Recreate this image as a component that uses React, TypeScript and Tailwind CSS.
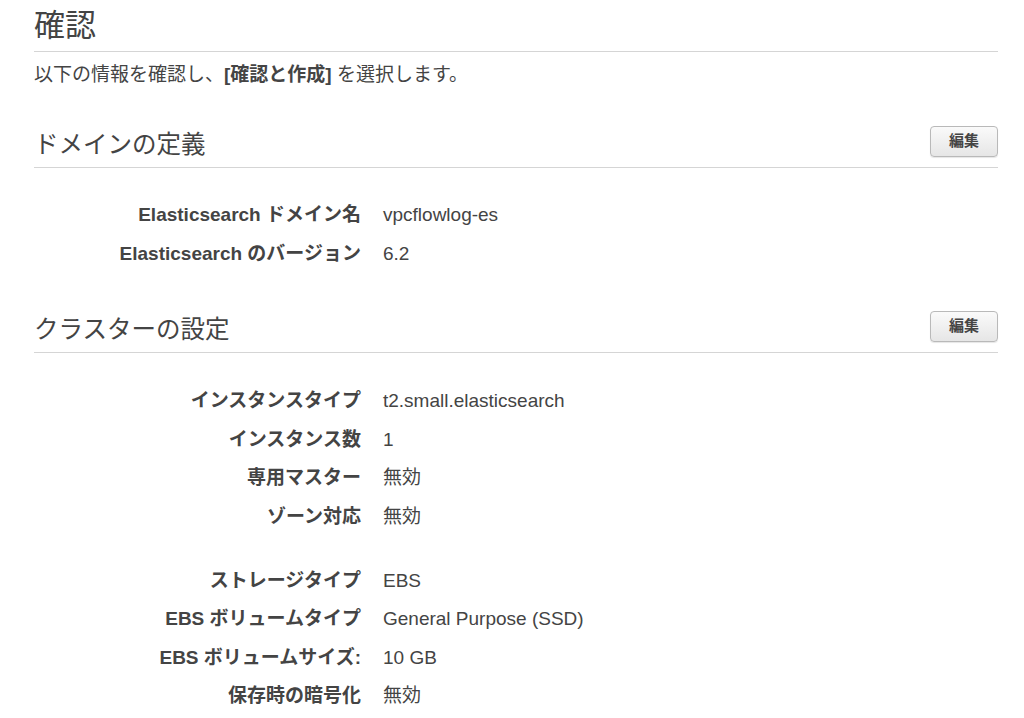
import React from 'react';

interface Field {
  label: string;
  value: string;
}

const domainFields: Field[] = [
  { label: 'Elasticsearch ドメイン名', value: 'vpcflowlog-es' },
  { label: 'Elasticsearch のバージョン', value: '6.2' },
];

const clusterFields: Field[][] = [
  [
    { label: 'インスタンスタイプ', value: 't2.small.elasticsearch' },
    { label: 'インスタンス数', value: '1' },
    { label: '専用マスター', value: '無効' },
    { label: 'ゾーン対応', value: '無効' },
  ],
  [
    { label: 'ストレージタイプ', value: 'EBS' },
    { label: 'EBS ボリュームタイプ', value: 'General Purpose (SSD)' },
    { label: 'EBS ボリュームサイズ:', value: '10 GB' },
    { label: '保存時の暗号化', value: '無効' },
  ],
];

const SectionHeader: React.FC<{ title: string }> = ({ title }) => (
  <div className="flex items-end justify-between border-b border-[#d5d5d5] pb-[6px]">
    <h2 className="text-[24.5px] leading-[32px] text-[#444]">{title}</h2>
    <button
      type="button"
      className="mb-[4px] h-[31px] w-[68px] rounded-[4px] border border-[#b9b9b9] bg-gradient-to-b from-[#fafafa] to-[#e6e6e6] text-[15px] font-bold text-[#444] shadow-[0_1px_1px_rgba(0,0,0,0.1)]"
    >
      編集
    </button>
  </div>
);

const FieldList: React.FC<{ fields: Field[] }> = ({ fields }) => (
  <dl className="flex flex-col">
    {fields.map((f) => (
      <div key={f.label} className="flex h-[38.5px] items-center text-[19px]">
        <dt className="w-[327px] text-right font-bold text-[#444]">{f.label}</dt>
        <dd className="pl-[22px] text-[#444]">{f.value}</dd>
      </div>
    ))}
  </dl>
);

export default function App() {
  return (
    <div
      className="min-h-screen bg-white pl-[34px] pr-[26px] pt-[7px]"
      style={{ fontFamily: '"Liberation Sans", "Noto Sans CJK JP", sans-serif' }}
    >
      <h1 className="border-b border-[#d5d5d5] pb-[6px] text-[31px] leading-[38px] text-[#444]">確認</h1>
      <p className="mt-[11px] text-[19px] leading-[24px] text-[#444]">
        以下の情報を確認し、<b>[確認と作成]</b> を選択します。
      </p>

      <section className="mt-[39px]">
        <SectionHeader title="ドメインの定義" />
        <div className="mt-[28px]">
          <FieldList fields={domainFields} />
        </div>
      </section>

      <section className="mt-[38px]">
        <SectionHeader title="クラスターの設定" />
        <div className="mt-[29px] flex flex-col gap-[25.5px]">
          {clusterFields.map((group, i) => (
            <FieldList key={i} fields={group} />
          ))}
        </div>
      </section>
    </div>
  );
}
